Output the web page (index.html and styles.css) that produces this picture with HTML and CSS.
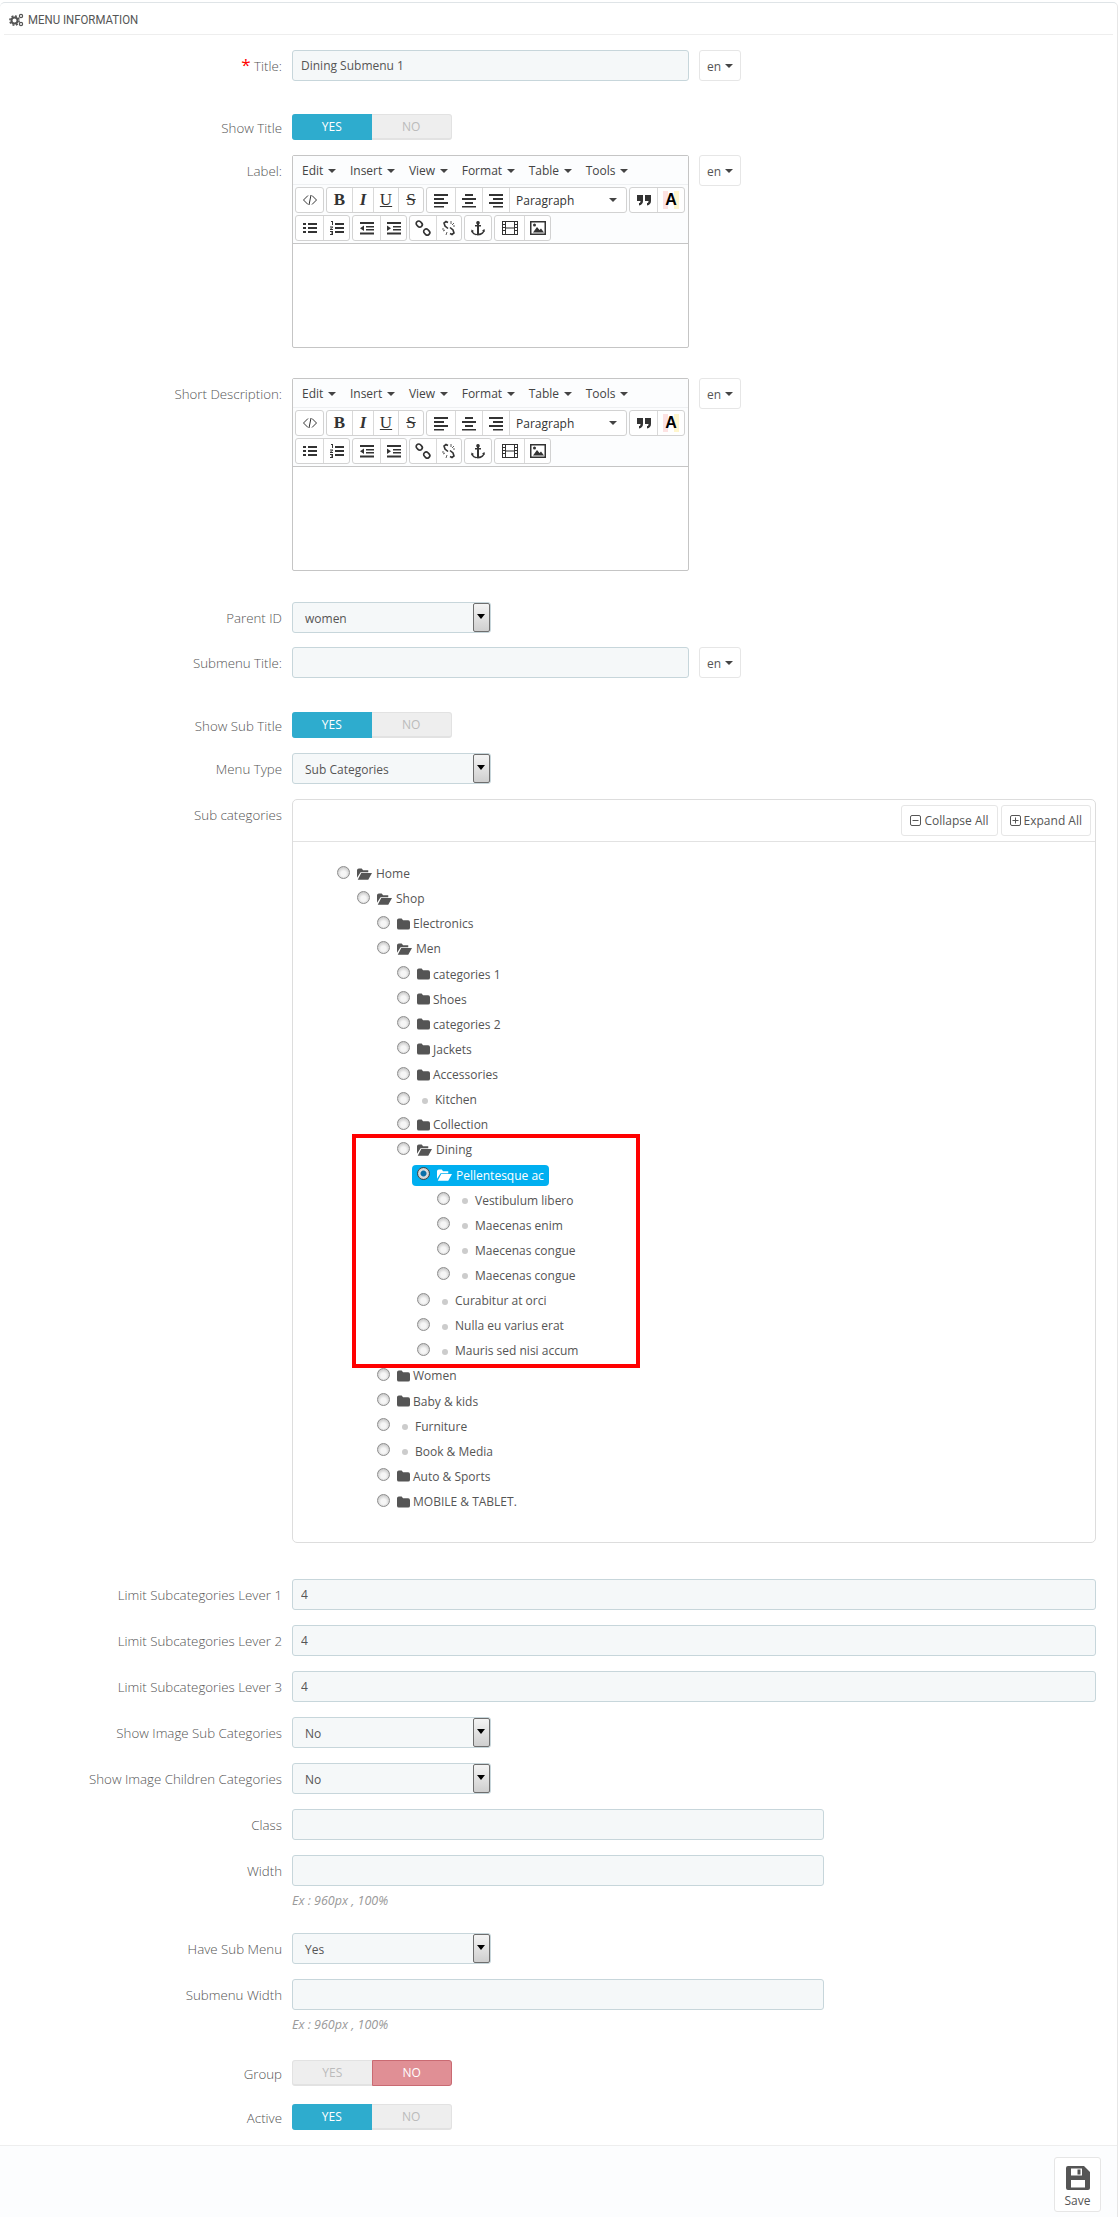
FILE: index.html
```html
<!DOCTYPE html>
<html lang="en">
<head>
    <meta charset="UTF-8">
    <title>Menu Information</title>
    <link rel="stylesheet" href="styles.css">
</head>
<body>
    <svg class="sprite" xmlns="http://www.w3.org/2000/svg">
        <symbol id="i-code" viewBox="0 0 16 16"><path d="M6 3.500 1.500 8 6 12.500M10 3.500 14.500 8 10 12.500M9 3 7 13" fill="none" stroke="currentColor"/></symbol>
        <symbol id="i-left" viewBox="0 0 16 16"><path d="M1 2h14v2H1zM1 6h10v2H1zM1 10h14v2H1zM1 14h10v1.500H1z"/></symbol>
        <symbol id="i-center" viewBox="0 0 16 16"><path d="M1 14h14v1.500H1zM4 2h8v2H4zM1 6h14v2H1zM4 10h8v2H4z"/></symbol>
        <symbol id="i-right" viewBox="0 0 16 16"><path d="M1 2h14v2H1zM5 6h10v2H5zM1 10h14v2H1zM5 14h10v1.500H5z"/></symbol>
        <symbol id="i-quote" viewBox="0 0 16 16"><path d="M1 3h6v6c0 2.500-1.500 4-4 4.500V11c1 0 1.500-.5 1.500-2H1zM9 3h6v6c0 2.500-1.500 4-4 4.500V11c1 0 1.500-.5 1.500-2H9z"/></symbol>
        <symbol id="i-bullets" viewBox="0 0 16 16"><path d="M1 3h3v2H1zM6 3h9v2H6zM1 7h3v2H1zM6 7h9v2H6zM1 11h3v2H1zM6 11h9v2H6z"/></symbol>
        <symbol id="i-numbers" viewBox="0 0 16 16"><path d="M6 3h9v2H6zM6 7h9v2H6zM6 11h9v2H6zM2 1h2v4H3V2H2zM1 6.500h3v1L2 9h2v1H1V9l2-1.500H1zM1 11h3v4H1v-1h2v-.5H2v-1h1V12H1z"/></symbol>
        <symbol id="i-outdent" viewBox="0 0 16 16"><path d="M1 2h14v2H1zM7 6h8v1.500H7zM7 9h8v1.500H7zM1 12.500h14v2H1zM5 5.500v5.500L1 8.200z"/></symbol>
        <symbol id="i-indent" viewBox="0 0 16 16"><path d="M1 2h14v2H1zM7 6h8v1.500H7zM7 9h8v1.500H7zM1 12.500h14v2H1zM1 5.500v5.500l4-2.800z"/></symbol>
        <symbol id="i-link" viewBox="0 0 16 16"><g fill="none" stroke="currentColor" stroke-width="1.700"><rect x="1" y="1.500" width="6.500" height="5" rx="2.500" transform="rotate(45 4.200 4)"/><rect x="8.500" y="9.500" width="6.500" height="5" rx="2.500" transform="rotate(45 11.700 12)"/></g></symbol>
        <symbol id="i-unlink" viewBox="0 0 16 16"><path d="M7 2.500 5 1.500 3 3 4 6l3 2.500M9 7.500l3 2.500 1 3-2 1.500-2-1" fill="none" stroke="currentColor" stroke-width="1.600"/><path d="M10 1v3M13 3l-2 2M2 11l2-1M5 15l1-3M14 6h-2M1 9h2" fill="none" stroke="currentColor" stroke-width=".8"/></symbol>
        <symbol id="i-anchor" viewBox="0 0 16 16"><path d="M8 1a1.800 1.800 0 0 1 1 3.300V5h2v1.500H9v7c2 0 3.500-1 4-2.500l-1-.5 2.500-1.500.5 3-.8-.4C13.800 14 11 15.500 8 15.500S2.200 14 1.800 12.100l-.8.4.5-3L4 11l-1 .5c.5 1.500 2 2.500 4 2.500V6.500H5V5h2v-.7A1.800 1.800 0 0 1 8 1z"/></symbol>
        <symbol id="i-media" viewBox="0 0 16 16"><path fill-rule="evenodd" d="M0 1h16v14H0zM1 2v2h2V2zM13 2v2h2V2zM1 5v2h2V5zM13 5v2h2V5zM1 8v2h2V8zM13 8v2h2V8zM1 11v3h2v-3zM13 11v3h2v-3zM4 2v5.500h8V2zM4 8.500V14h8V8.500z"/></symbol>
        <symbol id="i-image" viewBox="0 0 16 16"><path fill-rule="evenodd" d="M0 1h16v14H0zM1.500 2.500v11h13v-11z"/><path d="M3 12.500 7 7l2.500 3L11 8.500l3 4z"/><circle cx="4.500" cy="5" r="1.500"/></symbol>
        <symbol id="i-folder" viewBox="0 0 14 12"><path d="M0 2Q0 0 2 0H5L6.500 2H12Q14 2 14 4V10Q14 12 12 12H2Q0 12 0 10Z"/></symbol>
        <symbol id="i-folder-open" viewBox="0 0 16 12"><path d="M0 2Q0 0 2 0H5L6.500 2H12V4H3.800L0 10ZM4.500 5H16L12 12H.8Z"/></symbol>
        <symbol id="i-minus" viewBox="0 0 11 11"><path fill="none" stroke="currentColor" d="M2 .5h7A1.500 1.500 0 0 1 10.500 2v7A1.500 1.500 0 0 1 9 10.500H2A1.500 1.500 0 0 1 .5 9V2A1.500 1.500 0 0 1 2 .5zM2.500 5.500h6"/></symbol>
        <symbol id="i-plus" viewBox="0 0 11 11"><path fill="none" stroke="currentColor" d="M2 .5h7A1.500 1.500 0 0 1 10.500 2v7A1.500 1.500 0 0 1 9 10.500H2A1.500 1.500 0 0 1 .5 9V2A1.500 1.500 0 0 1 2 .5zM2.500 5.500h6M5.500 2.500v6"/></symbol>
    </svg>

    <div class="panel">
        <div class="panel-heading">
            <svg class="cogs" viewBox="0 0 15 14">
                <g fill="none" stroke="currentColor">
                    <circle cx="5.500" cy="7.500" r="3" stroke-width="2"/>
                    <circle cx="5.500" cy="7.500" r="4.600" stroke-width="1.600" stroke-dasharray="2 1.600"/>
                    <circle cx="12" cy="3" r="1.600" stroke-width="1.200"/>
                    <circle cx="12" cy="11" r="1.600" stroke-width="1.200"/>
                </g>
            </svg>
            <span class="panel-title">MENU INFORMATION</span>
        </div>

        <div class="panel-body">
            <div class="form-group mb-33">
                <label class="control-label"><span class="required">*</span> Title:</label>
                <input class="form-control w-lang" type="text" value="Dining Submenu 1">
                <button class="btn-lang" type="button">en<i class="caret"></i></button>
            </div>

            <div class="form-group">
                <label class="control-label label-switch">Show Title</label>
                <div class="switch"><span class="on">YES</span><span>NO</span></div>
            </div>

            <div class="form-group mb-30">
                <label class="control-label">Label:</label>
                <div class="editor">
                    <div class="editor-menu">
                        <span>Edit<i class="caret"></i></span><span>Insert<i class="caret"></i></span><span>View<i class="caret"></i></span><span>Format<i class="caret"></i></span><span>Table<i class="caret"></i></span><span>Tools<i class="caret"></i></span>
                    </div>
                    <div class="editor-toolbar">
                        <div class="tool-row">
                            <div class="tool-group"><span class="tool w27"><svg><use href="#i-code"/></svg></span></div>
                            <div class="tool-group">
                                <span class="tool w25 serif"><b>B</b></span>
                                <span class="tool w21 serif"><b><i>I</i></b></span>
                                <span class="tool w25 serif"><u>U</u></span>
                                <span class="tool w25 serif"><s>S</s></span>
                            </div>
                            <div class="tool-group">
                                <span class="tool w28"><svg><use href="#i-left"/></svg></span>
                                <span class="tool w27"><svg><use href="#i-center"/></svg></span>
                                <span class="tool w27"><svg><use href="#i-right"/></svg></span>
                                <span class="tool w117 tool-select">Paragraph<i class="caret"></i></span>
                            </div>
                            <div class="tool-group">
                                <span class="tool w27"><svg><use href="#i-quote"/></svg></span>
                                <span class="tool w27"><span class="color-a">A</span></span>
                            </div>
                        </div>
                        <div class="tool-row">
                            <div class="tool-group">
                                <span class="tool w27"><svg><use href="#i-bullets"/></svg></span>
                                <span class="tool w26"><svg><use href="#i-numbers"/></svg></span>
                            </div>
                            <div class="tool-group">
                                <span class="tool w27"><svg><use href="#i-outdent"/></svg></span>
                                <span class="tool w26"><svg><use href="#i-indent"/></svg></span>
                            </div>
                            <div class="tool-group">
                                <span class="tool w26"><svg><use href="#i-link"/></svg></span>
                                <span class="tool w25"><svg><use href="#i-unlink"/></svg></span>
                            </div>
                            <div class="tool-group"><span class="tool w26"><svg><use href="#i-anchor"/></svg></span></div>
                            <div class="tool-group">
                                <span class="tool w29"><svg><use href="#i-media"/></svg></span>
                                <span class="tool w26"><svg><use href="#i-image"/></svg></span>
                            </div>
                        </div>
                    </div>
                    <div class="editor-area"></div>
                </div>
                <button class="btn-lang" type="button">en<i class="caret"></i></button>
            </div>

            <div class="form-group mb-31">
                <label class="control-label">Short Description:</label>
                <div class="editor">
                    <div class="editor-menu">
                        <span>Edit<i class="caret"></i></span><span>Insert<i class="caret"></i></span><span>View<i class="caret"></i></span><span>Format<i class="caret"></i></span><span>Table<i class="caret"></i></span><span>Tools<i class="caret"></i></span>
                    </div>
                    <div class="editor-toolbar">
                        <div class="tool-row">
                            <div class="tool-group"><span class="tool w27"><svg><use href="#i-code"/></svg></span></div>
                            <div class="tool-group">
                                <span class="tool w25 serif"><b>B</b></span>
                                <span class="tool w21 serif"><b><i>I</i></b></span>
                                <span class="tool w25 serif"><u>U</u></span>
                                <span class="tool w25 serif"><s>S</s></span>
                            </div>
                            <div class="tool-group">
                                <span class="tool w28"><svg><use href="#i-left"/></svg></span>
                                <span class="tool w27"><svg><use href="#i-center"/></svg></span>
                                <span class="tool w27"><svg><use href="#i-right"/></svg></span>
                                <span class="tool w117 tool-select">Paragraph<i class="caret"></i></span>
                            </div>
                            <div class="tool-group">
                                <span class="tool w27"><svg><use href="#i-quote"/></svg></span>
                                <span class="tool w27"><span class="color-a">A</span></span>
                            </div>
                        </div>
                        <div class="tool-row">
                            <div class="tool-group">
                                <span class="tool w27"><svg><use href="#i-bullets"/></svg></span>
                                <span class="tool w26"><svg><use href="#i-numbers"/></svg></span>
                            </div>
                            <div class="tool-group">
                                <span class="tool w27"><svg><use href="#i-outdent"/></svg></span>
                                <span class="tool w26"><svg><use href="#i-indent"/></svg></span>
                            </div>
                            <div class="tool-group">
                                <span class="tool w26"><svg><use href="#i-link"/></svg></span>
                                <span class="tool w25"><svg><use href="#i-unlink"/></svg></span>
                            </div>
                            <div class="tool-group"><span class="tool w26"><svg><use href="#i-anchor"/></svg></span></div>
                            <div class="tool-group">
                                <span class="tool w29"><svg><use href="#i-media"/></svg></span>
                                <span class="tool w26"><svg><use href="#i-image"/></svg></span>
                            </div>
                        </div>
                    </div>
                    <div class="editor-area"></div>
                </div>
                <button class="btn-lang" type="button">en<i class="caret"></i></button>
            </div>

            <div class="form-group mb-14">
                <label class="control-label">Parent ID</label>
                <div class="select"><span>women</span><i class="select-arrow"></i></div>
            </div>

            <div class="form-group mb-34">
                <label class="control-label">Submenu Title:</label>
                <input class="form-control w-lang" type="text">
                <button class="btn-lang" type="button">en<i class="caret"></i></button>
            </div>

            <div class="form-group">
                <label class="control-label label-switch">Show Sub Title</label>
                <div class="switch"><span class="on">YES</span><span>NO</span></div>
            </div>

            <div class="form-group">
                <label class="control-label">Menu Type</label>
                <div class="select"><span>Sub Categories</span><i class="select-arrow"></i></div>
            </div>

            <div class="form-group mb-36">
                <label class="control-label">Sub categories</label>
                <div class="tree-panel">
                    <div class="tree-heading">
                        <button class="btn-tree" type="button"><svg><use href="#i-minus"/></svg>Collapse All</button>
                        <button class="btn-tree" type="button"><svg><use href="#i-plus"/></svg>Expand All</button>
                    </div>
                    <div class="tree-body">
                        <ul class="tree">
                            <li><div class="node"><input type="radio" name="cat"><svg class="ico-open"><use href="#i-folder-open"/></svg><span>Home</span></div>
                                <ul>
                                    <li><div class="node"><input type="radio" name="cat"><svg class="ico-open"><use href="#i-folder-open"/></svg><span>Shop</span></div>
                                        <ul>
                                            <li><div class="node"><input type="radio" name="cat"><svg class="ico-closed"><use href="#i-folder"/></svg><span>Electronics</span></div></li>
                                            <li><div class="node"><input type="radio" name="cat"><svg class="ico-open"><use href="#i-folder-open"/></svg><span>Men</span></div>
                                                <ul>
                                                    <li><div class="node"><input type="radio" name="cat"><svg class="ico-closed"><use href="#i-folder"/></svg><span>categories 1</span></div></li>
                                                    <li><div class="node"><input type="radio" name="cat"><svg class="ico-closed"><use href="#i-folder"/></svg><span>Shoes</span></div></li>
                                                    <li><div class="node"><input type="radio" name="cat"><svg class="ico-closed"><use href="#i-folder"/></svg><span>categories 2</span></div></li>
                                                    <li><div class="node"><input type="radio" name="cat"><svg class="ico-closed"><use href="#i-folder"/></svg><span>Jackets</span></div></li>
                                                    <li><div class="node"><input type="radio" name="cat"><svg class="ico-closed"><use href="#i-folder"/></svg><span>Accessories</span></div></li>
                                                    <li><div class="node"><input type="radio" name="cat"><i class="dot"></i><span>Kitchen</span></div></li>
                                                    <li><div class="node"><input type="radio" name="cat"><svg class="ico-closed"><use href="#i-folder"/></svg><span>Collection</span></div></li>
                                                    <li><div class="node"><input type="radio" name="cat"><svg class="ico-open"><use href="#i-folder-open"/></svg><span>Dining</span></div>
                                                        <ul>
                                                            <li><div class="node selected"><input type="radio" name="cat" checked><svg class="ico-open"><use href="#i-folder-open"/></svg><span>Pellentesque ac</span></div>
                                                                <ul>
                                                                    <li><div class="node"><input type="radio" name="cat"><i class="dot"></i><span>Vestibulum libero</span></div></li>
                                                                    <li><div class="node"><input type="radio" name="cat"><i class="dot"></i><span>Maecenas enim</span></div></li>
                                                                    <li><div class="node"><input type="radio" name="cat"><i class="dot"></i><span>Maecenas congue</span></div></li>
                                                                    <li><div class="node"><input type="radio" name="cat"><i class="dot"></i><span>Maecenas congue</span></div></li>
                                                                </ul>
                                                            </li>
                                                            <li><div class="node"><input type="radio" name="cat"><i class="dot"></i><span>Curabitur at orci</span></div></li>
                                                            <li><div class="node"><input type="radio" name="cat"><i class="dot"></i><span>Nulla eu varius erat</span></div></li>
                                                            <li><div class="node"><input type="radio" name="cat"><i class="dot"></i><span>Mauris sed nisi accum</span></div></li>
                                                        </ul>
                                                    </li>
                                                </ul>
                                            </li>
                                            <li><div class="node"><input type="radio" name="cat"><svg class="ico-closed"><use href="#i-folder"/></svg><span>Women</span></div></li>
                                            <li><div class="node"><input type="radio" name="cat"><svg class="ico-closed"><use href="#i-folder"/></svg><span>Baby &amp; kids</span></div></li>
                                            <li><div class="node"><input type="radio" name="cat"><i class="dot"></i><span>Furniture</span></div></li>
                                            <li><div class="node"><input type="radio" name="cat"><i class="dot"></i><span>Book &amp; Media</span></div></li>
                                            <li><div class="node"><input type="radio" name="cat"><svg class="ico-closed"><use href="#i-folder"/></svg><span>Auto &amp; Sports</span></div></li>
                                            <li><div class="node"><input type="radio" name="cat"><svg class="ico-closed"><use href="#i-folder"/></svg><span>MOBILE &amp; TABLET.</span></div></li>
                                        </ul>
                                    </li>
                                </ul>
                            </li>
                        </ul>
                        <div class="red-box"></div>
                    </div>
                </div>
            </div>

            <div class="form-group">
                <label class="control-label">Limit Subcategories Lever 1</label>
                <input class="form-control w-full" type="text" value="4">
            </div>
            <div class="form-group">
                <label class="control-label">Limit Subcategories Lever 2</label>
                <input class="form-control w-full" type="text" value="4">
            </div>
            <div class="form-group">
                <label class="control-label">Limit Subcategories Lever 3</label>
                <input class="form-control w-full" type="text" value="4">
            </div>
            <div class="form-group">
                <label class="control-label">Show Image Sub Categories</label>
                <div class="select"><span>No</span><i class="select-arrow"></i></div>
            </div>
            <div class="form-group">
                <label class="control-label">Show Image Children Categories</label>
                <div class="select"><span>No</span><i class="select-arrow"></i></div>
            </div>
            <div class="form-group">
                <label class="control-label">Class</label>
                <input class="form-control w-mid" type="text">
            </div>
            <div class="form-group mb-24">
                <label class="control-label">Width</label>
                <div>
                    <input class="form-control w-mid" type="text">
                    <p class="help">Ex : 960px , 100%</p>
                </div>
            </div>
            <div class="form-group">
                <label class="control-label">Have Sub Menu</label>
                <div class="select"><span>Yes</span><i class="select-arrow"></i></div>
            </div>
            <div class="form-group mb-27">
                <label class="control-label">Submenu Width</label>
                <div>
                    <input class="form-control w-mid" type="text">
                    <p class="help">Ex : 960px , 100%</p>
                </div>
            </div>
            <div class="form-group mb-18">
                <label class="control-label label-switch">Group</label>
                <div class="switch"><span>YES</span><span class="off">NO</span></div>
            </div>
            <div class="form-group">
                <label class="control-label label-switch">Active</label>
                <div class="switch"><span class="on">YES</span><span>NO</span></div>
            </div>
        </div>

        <div class="panel-footer">
            <button class="btn-save" type="button">
                <svg viewBox="0 0 24 24"><path fill-rule="evenodd" d="M0 2Q0 0 2 0H18L24 6V22Q24 24 22 24H2Q0 24 0 22ZM5 14V21.500H19V14ZM5 2.500V9.500H16V2.500ZM11.500 3.500H14.500V8.500H11.500Z"/></svg>
                <span>Save</span>
            </button>
        </div>
    </div>
</body>
</html>
```

FILE: styles.css
```css
* { box-sizing: border-box; }
html, body { margin: 0; padding: 0; }
body { background: #fff; font-family: "Open Sans", sans-serif; font-size: 12px; color: #555; }
.sprite { display: none; }

.panel { margin-top: 2px; border-top: 1px solid #dfe4e7; border-right: 1px solid #e6e6e6; border-radius: 5px 5px 0 0; height: 2215px; }
.panel-heading { display: flex; align-items: center; height: 32px; margin: 0 4px; padding-left: 5px; padding-top: 2px; border-bottom: 1px solid #eee; }
.panel-title { font-family: Roboto, sans-serif; font-size: 13px; color: #555; transform: scaleX(.88); transform-origin: left center; }
.cogs { width: 15px; height: 14px; margin-right: 4px; color: #555; }
.panel-body { padding-top: 15px; height: 2110px; }

.form-group { display: flex; align-items: flex-start; margin-bottom: 15px; }
.mb-14 { margin-bottom: 14px; }
.mb-18 { margin-bottom: 18px; }
.mb-24 { margin-bottom: 24px; }
.mb-27 { margin-bottom: 27px; }
.mb-30 { margin-bottom: 30px; }
.mb-31 { margin-bottom: 31px; }
.mb-33 { margin-bottom: 33px; }
.mb-34 { margin-bottom: 34px; }
.mb-36 { margin-bottom: 36px; }

.control-label { flex: 0 0 282px; margin-right: 10px; padding-top: 7px; line-height: 18px; text-align: right; font-size: 13.3px; font-weight: 300; color: #555; }
.label-switch { padding-top: 5px; }
.required { color: #f00; font-size: 17px; font-weight: 400; line-height: 12px; }

.form-control { display: block; height: 31px; padding: 0 8px; background: #f5f8f9; border: 1px solid #c7d6db; border-radius: 3px; font: inherit; color: #555; }
.w-lang { width: 397px; }
.w-mid { width: 532px; }
.w-full { width: 804px; }

.btn-lang { display: flex; align-items: center; justify-content: center; width: 42px; height: 31px; margin-left: 10px; padding: 1px 0 0; background: #fff; border: 1px solid #e6e6e6; border-radius: 3px; font: inherit; color: #555; }
.caret { display: inline-block; width: 0; height: 0; margin-left: 4px; border-left: 4px solid transparent; border-right: 4px solid transparent; border-top: 4px solid #444; }

.switch { display: flex; width: 160px; height: 26px; background: #eee; border: 1px solid #e2e2e2; border-bottom-width: 2px; border-radius: 3px; }
.switch span { flex: 1; line-height: 23px; text-align: center; color: #bbb; }
.switch .on { margin: -1px 0 -2px -1px; line-height: 26px; background: #2eacce; border-radius: 3px 0 0 3px; color: #fff; }
.switch .off { margin: -1px -1px -2px 0; line-height: 24px; background: #e08f95; border: 1px solid #c96a72; border-radius: 0 3px 3px 0; color: #fff; }

.select { position: relative; width: 199px; height: 31px; padding: 0 12px; line-height: 32px; background: #f5f8f9; border: 1px solid #c7d6db; border-radius: 3px; }
.select-arrow { position: absolute; top: 0; right: 0; width: 17px; height: 29px; background: linear-gradient(#f4f4f4, #cfcfcf); border: 1px solid #6e6e6e; border-radius: 2px; }
.select-arrow::after { content: ""; position: absolute; top: 10px; left: 3px; border-left: 4px solid transparent; border-right: 4px solid transparent; border-top: 5px solid #000; }

.editor { width: 397px; background: #fff; border: 1px solid #c5c5c5; border-radius: 2px; }
.editor-menu { display: flex; gap: 13.6px; align-items: center; height: 29px; padding-left: 9px; background: #fcfdfe; border-bottom: 1px solid #eef0f2; color: #444; }
.editor-menu .caret { margin-left: 5px; vertical-align: 2px; }
.editor-toolbar { padding: 2px 2px 2px; background: #fcfdfe; border-bottom: 1px solid #c5c5c5; }
.tool-row { display: flex; gap: 2px; margin-bottom: 2px; }
.tool-row:last-child { margin-bottom: 0; }
.tool-group { display: flex; height: 26px; background: #fff; border: 1px solid #d2d2d2; border-radius: 3px; }
.tool { display: flex; align-items: center; justify-content: center; height: 24px; color: #333; border-left: 1px solid #d9d9d9; fill: #333; }
.tool:first-child { border-left: 0; }
.tool svg { width: 16px; height: 16px; }
.w21 { width: 21px; }
.w25 { width: 25px; }
.w26 { width: 26px; }
.w27 { width: 27px; }
.w28 { width: 28px; }
.w29 { width: 29px; }
.w117 { width: 117px; }
.serif { font-family: "Liberation Serif", serif; font-size: 17px; }
.serif s { padding: 0 3px; }
.tool-select { justify-content: space-between; padding: 0 9px 0 6px; font-family: "Open Sans", sans-serif; font-size: 12px; }
.color-a { width: 16px; height: 18px; font: bold 16px/18px "Liberation Sans", sans-serif; text-align: center; color: #000; background: linear-gradient(90deg, #fde2e2 30%, #fff 30%, #fff 70%, #fff6cc 70%); }
.editor-area { height: 103px; }

.tree-panel { width: 804px; height: 744px; border: 1px solid #ddd; border-radius: 5px; }
.tree-heading { display: flex; justify-content: flex-end; gap: 3px; height: 42px; padding: 5px 4px 0 0; border-bottom: 1px solid #e2e2e2; }
.btn-tree { display: flex; align-items: center; justify-content: center; height: 31px; padding: 0 8px; background: #fff; border: 1px solid #e6e6e6; border-radius: 3px; font: inherit; color: #555; }
.btn-tree svg { width: 11px; height: 11px; margin-right: 3px; }
.tree-body { position: relative; padding: 19px 0 0 44px; }
.tree, .tree ul { margin: 0; padding: 0; list-style: none; }
.tree ul { padding-left: 20px; }
.node { display: flex; align-items: center; height: 25.14px; fill: #555; }
.node input { appearance: none; flex: none; width: 13px; height: 13px; margin: -3px 7px 0 0; background: radial-gradient(circle at 50% 60%, #f6f6f6 0 30%, #cfcfcf 70%, #aaa 100%); border: 1px solid #8e8e8e; border-radius: 50%; }
.node input:checked { background: radial-gradient(circle, #0a6fa8 0 2.500px, #e0e0e0 3.500px, #aaa 100%); border-color: #444; }
.ico-open { flex: none; width: 15px; height: 12px; margin-right: 4px; }
.ico-closed { flex: none; width: 13px; height: 12px; margin-right: 3px; }
.dot { flex: none; width: 6px; height: 6px; margin: 2px 7.500px 0 4.500px; background: #ccc; border-radius: 50%; }
.selected { width: max-content; height: 21px; margin: 2px 0 2px -5px; padding: 0 5px; background: #00aff0; border-radius: 4px; color: #fff; fill: #fff; }
.red-box { position: absolute; left: 59px; top: 292px; width: 288px; height: 234px; border: 4px solid #f00; pointer-events: none; }

.help { margin: 6px 0 0; line-height: 17px; font-size: 12.5px; font-style: italic; color: #999; }

.panel-footer { display: flex; justify-content: flex-end; height: 72px; padding: 11px 16px 0 0; background: #fcfdfe; border-top: 1px solid #eee; }
.btn-save { display: flex; flex-direction: column; align-items: center; width: 47px; height: 55px; padding: 8px 0 0; background: #fff; border: 1px solid #e6e6e6; border-radius: 3px; font: inherit; color: #555; fill: #555; }
.btn-save svg { width: 24px; height: 24px; margin-bottom: 2px; }
```
